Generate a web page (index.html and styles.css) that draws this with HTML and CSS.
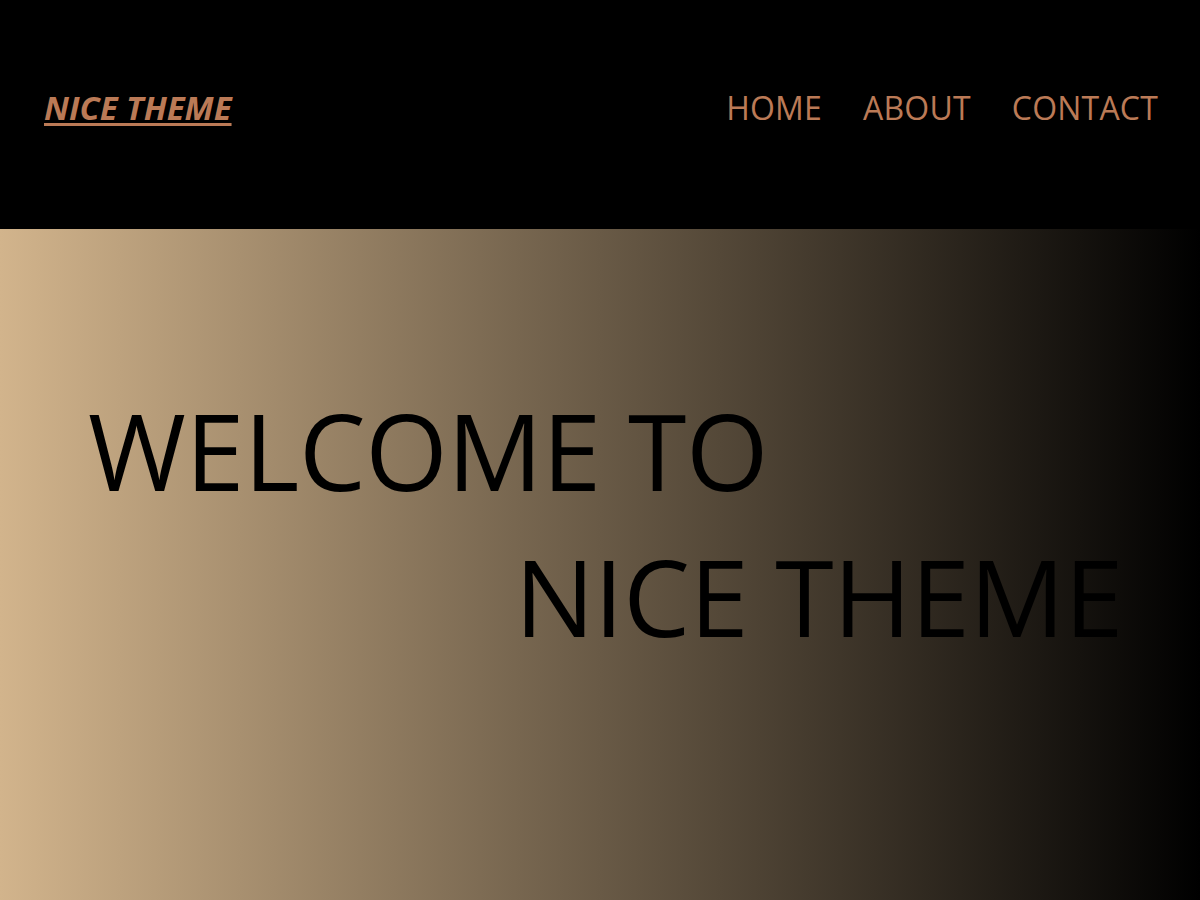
FILE: index.html
```html
<!DOCTYPE html>
<html lang="en">
<head>
<meta charset="utf-8">
<title>Nice Theme</title>
<link rel="stylesheet" href="styles.css">
</head>
<body>
<header class="site-header">
  <a class="logo" href="#">NICE THEME</a>
  <nav class="nav">
    <a href="#">HOME</a>
    <a href="#">ABOUT</a>
    <a href="#">CONTACT</a>
  </nav>
</header>
<main class="hero">
  <h1 class="hero-title">
    <span class="line line-1">WELCOME TO</span>
    <span class="line line-2">NICE THEME</span>
  </h1>
</main>
</body>
</html>
```
FILE: styles.css
```css
html, body {
  margin: 0;
  padding: 0;
  height: 100%;
}
body {
  font-family: "Open Sans", "Noto Sans", sans-serif;
  background: #000;
  display: flex;
  flex-direction: column;
}
.site-header {
  height: 229px;
  background: #000;
  display: flex;
  align-items: center;
  justify-content: space-between;
  padding: 0 42px 14px 44px;
  box-sizing: border-box;
  flex: none;
}
.logo {
  color: #bb7a56;
  font-weight: 700;
  font-style: italic;
  font-size: 33px;
  letter-spacing: 0;
  text-decoration: underline;
  text-decoration-thickness: 3px;
  text-underline-offset: 3px;
}
.nav {
  display: flex;
  gap: 41px;
}
.nav a {
  color: #bb7a56;
  text-decoration: none;
  font-size: 32px;
  letter-spacing: 0.2px;
}
.hero {
  flex: 1;
  background: linear-gradient(to right, #d2b48c, #000);
  padding: 0 77px 0 88px;
}
.hero-title {
  margin: 0;
  padding-top: 148px;
  font-weight: 500;
  font-size: 106px;
  line-height: 146px;
  color: #000;
  display: flex;
  flex-direction: column;
  letter-spacing: -0.4px;
}
.line-2 {
  align-self: flex-end;
}
```
